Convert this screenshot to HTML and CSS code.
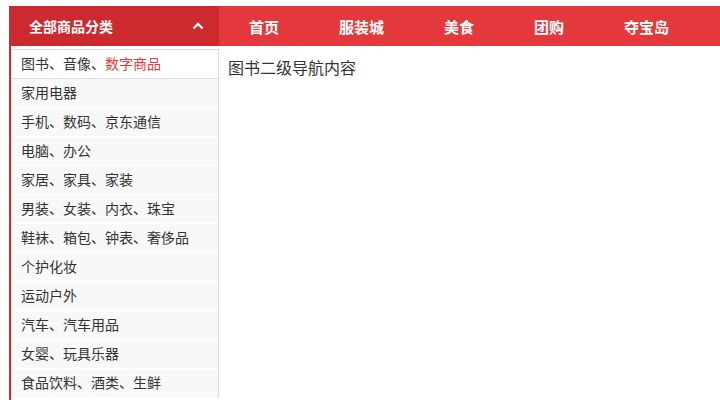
FILE: index.html
```html
<!DOCTYPE html>
<html lang="zh-CN">
<head>
    <meta charset="UTF-8">
    <meta name="viewport" content="width=device-width, initial-scale=1.0">
    <title>全部商品分类</title>
    <link rel="stylesheet" href="styles.css">
</head>
<body>
    <div class="wrapper">
        <!-- 左侧分类 -->
        <div class="sidebar">
            <div class="sidebar-title">
                <span>全部商品分类</span>
                <svg class="arrow" width="12" height="8" viewBox="0 0 12 8">
                    <polyline points="1.5,6.5 6,2 10.5,6.5" fill="none" stroke="#fff" stroke-width="2.4"/>
                </svg>
            </div>
            <ul class="category-list">
                <li class="active">图书、音像、<span class="hot">数字商品</span></li>
                <li>家用电器</li>
                <li>手机、数码、京东通信</li>
                <li>电脑、办公</li>
                <li>家居、家具、家装</li>
                <li>男装、女装、内衣、珠宝</li>
                <li>鞋袜、箱包、钟表、奢侈品</li>
                <li>个护化妆</li>
                <li>运动户外</li>
                <li>汽车、汽车用品</li>
                <li>女婴、玩具乐器</li>
                <li>食品饮料、酒类、生鲜</li>
            </ul>
        </div>

        <!-- 主导航 -->
        <div class="main">
            <ul class="nav">
                <li>首页</li>
                <li>服装城</li>
                <li>美食</li>
                <li>团购</li>
                <li>夺宝岛</li>
            </ul>
            <div class="sub-content">图书二级导航内容</div>
        </div>
    </div>
</body>
</html>
```

FILE: styles.css
```css
/* Page */
body {
    margin: 6px 0 0 9px;
    font-family: "Noto Sans CJK SC", "Liberation Sans", sans-serif;
    color: #333;
    background: #fff;
}

ul {
    list-style: none;
    margin: 0;
    padding: 0;
}

.wrapper {
    display: flex;
    align-items: flex-start;
}

/* Left category column */
.sidebar {
    width: 208px;
    border-left: 2px solid #cc2a2e;
    padding-bottom: 10px;
}

.sidebar-title {
    height: 40px;
    margin-left: -2px;
    padding: 0 15px 0 20px;
    background: #cc2a2e;
    color: #fff;
    font-size: 14px;
    font-weight: bold;
    display: flex;
    align-items: center;
    justify-content: space-between;
}

.arrow {
    display: block;
    margin-top: -1px;
}

.category-list {
    margin-top: 3px;
    border-top: 1px solid #ddd;
    border-right: 1px solid #ddd;
}

.category-list li {
    height: 28px;
    line-height: 26px;
    padding-left: 10px;
    padding-bottom: 2px;
    box-sizing: border-box;
    height: 29px;
    font-size: 14px;
    color: #333;
    background: #f8f8f8;
    border-bottom: 1px solid #fff;
    white-space: nowrap;
}

.category-list li.active {
    background: #fff;
    border-bottom-color: #ddd;
}

.hot {
    color: #e4393c;
}

/* Right side */
.main {
    flex: 1;
}

.nav {
    height: 40px;
    background: #e3393d;
    display: flex;
    align-items: center;
}

.nav li {
    padding: 0 30px;
    color: #fff;
    font-size: 15px;
    font-weight: bold;
}

.sub-content {
    padding: 9px 9px;
    font-size: 16px;
    color: #333;
}
```
